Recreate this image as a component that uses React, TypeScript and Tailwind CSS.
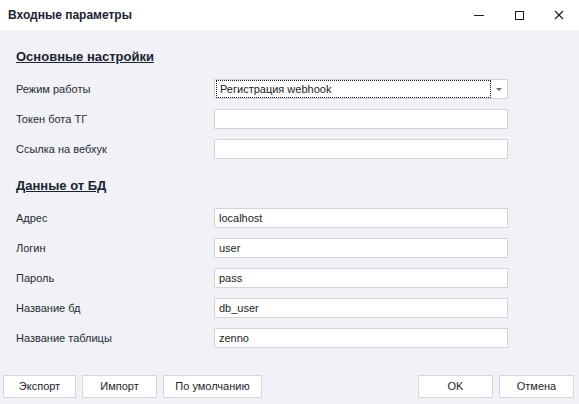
import React from 'react';

const font = { fontFamily: '"Liberation Sans", "Noto Sans", sans-serif' };

function Field({ label, value }: { label: string; value?: string }) {
  return (
    <div className="flex items-center h-[20px]">
      <div className="w-[198px] text-[11px] text-[#262a33]">{label}</div>
      <div className="w-[294px] h-[20px] bg-white border border-[#d1d4db] flex items-center px-[4px] text-[11px] text-[#1a1d24]">
        {value}
      </div>
    </div>
  );
}

function Btn({ label, w }: { label: string; w: string }) {
  return (
    <button className={`${w} h-[23px] bg-white border border-[#d3d6dd] text-[11px] text-[#1f232b] flex items-center justify-center`}>
      {label}
    </button>
  );
}

export default function App() {
  return (
    <div className="w-[579px] h-[404px] flex flex-col bg-[#f1f2f7] overflow-hidden" style={font}>
      {/* заголовок окна */}
      <div className="h-[30px] bg-white flex items-center shrink-0">
        <div className="pl-[8px] text-[12px] font-bold text-[#1b2230] flex-1">Входные параметры</div>
        <div className="flex items-center h-full">
          <div className="w-[40px] h-full flex items-center justify-center">
            <svg width="10" height="10" viewBox="0 0 10 10"><path d="M0 5.5h10" stroke="#1b1f27" strokeWidth="1" /></svg>
          </div>
          <div className="w-[40px] h-full flex items-center justify-center">
            <svg width="10" height="10" viewBox="0 0 10 10"><rect x="1.5" y="1.5" width="8" height="8" fill="none" stroke="#1b1f27" strokeWidth="1" /></svg>
          </div>
          <div className="w-[40px] h-full flex items-center justify-center">
            <svg width="10" height="10" viewBox="0 0 10 10"><path d="M1 1l8 8M9 1l-8 8" stroke="#1b1f27" strokeWidth="1.2" /></svg>
          </div>
        </div>
      </div>

      <div className="flex-1 px-[16px]">
        <div className="mt-[17px] h-[20px] flex items-center text-[13px] font-bold underline text-[#1b2230]">Основные настройки</div>

        <div className="mt-[12px] flex flex-col gap-[10px]">
          <div className="flex items-center h-[20px]">
            <div className="w-[198px] text-[11px] text-[#262a33]">Режим работы</div>
            <div className="w-[294px] h-[20px] bg-white border border-[#d1d4db] flex items-center">
              <div className="ml-[1px] w-[275px] h-[18px] border border-dotted border-[#1a1a1a] flex items-center px-[3px] text-[11px] text-[#1a1d24]">
                Регистрация webhook
              </div>
              <div className="flex-1 flex items-center justify-center">
                <svg width="6" height="3" viewBox="0 0 6 3"><path d="M0 0h6L3 3z" fill="#666a72" /></svg>
              </div>
            </div>
          </div>
          <Field label="Токен бота ТГ" />
          <Field label="Ссылка на вебхук" />
        </div>

        <div className="mt-[17px] h-[20px] flex items-center text-[13px] font-bold underline text-[#1b2230]">Данные от БД</div>

        <div className="mt-[12px] flex flex-col gap-[10px]">
          <Field label="Адрес" value="localhost" />
          <Field label="Логин" value="user" />
          <Field label="Пароль" value="pass" />
          <Field label="Название бд" value="db_user" />
          <Field label="Название таблицы" value="zenno" />
        </div>
      </div>

      <div className="flex items-center justify-between pl-[3px] pr-[5px] pb-[6px] shrink-0">
        <div className="flex gap-[6px]">
          <Btn label="Экспорт" w="w-[73px]" />
          <Btn label="Импорт" w="w-[75px]" />
          <Btn label="По умолчанию" w="w-[99px]" />
        </div>
        <div className="flex gap-[6px]">
          <Btn label="OK" w="w-[75px]" />
          <Btn label="Отмена" w="w-[75px]" />
        </div>
      </div>
    </div>
  );
}
